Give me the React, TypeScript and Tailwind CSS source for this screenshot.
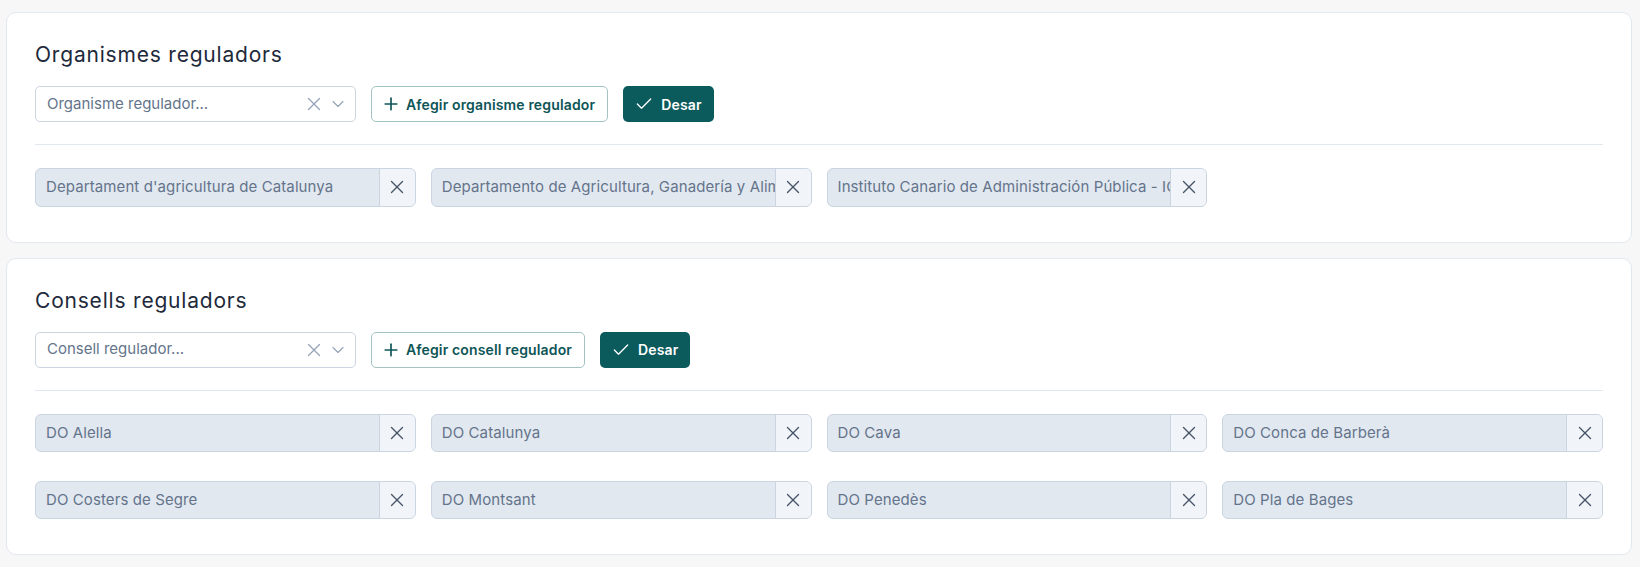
import React from 'react';
import { X, ChevronDown, Plus, Check } from 'lucide-react';

type SectionProps = {
    title: string;
    placeholder: string;
    addLabel: string;
    items: string[];
};

const Chip: React.FC<{ label: string }> = ({ label }) => (
    <div className="flex h-[38.5px] overflow-hidden rounded-md border border-[#cbd5e1] bg-[#e2e8f0]">
        <span className="flex min-w-0 flex-1 items-center overflow-hidden whitespace-nowrap pl-[10px] text-[15px] tracking-[0.1px] text-[#64748b]">
            {label}
        </span>
        <button className="flex w-9 shrink-0 items-center justify-center border-l border-[#cbd5e1] bg-[#f1f5f9] text-[#475569]">
            <X size={22} strokeWidth={1.5} />
        </button>
    </div>
);

const Section: React.FC<SectionProps> = ({ title, placeholder, addLabel, items }) => (
    <section className="rounded-[10px] border border-[#e2e8f0] bg-white px-7 pt-7 pb-[35px]">
        <h2 className="mb-[17px] text-[21px] leading-7 tracking-[0.8px] text-[#1e293b]">{title}</h2>

        {/* Toolbar */}
        <div className="flex items-center gap-[15px]">
            <div className="flex h-9 w-[321px] items-center rounded-[5px] border border-[#cbd5e1] bg-white pl-[11px] pr-[7px]">
                <span className="flex-1 text-[15px] text-[#64748b]">{placeholder}</span>
                <div className="flex items-center gap-[3px] text-[#94a3b8]">
                    <X size={22} strokeWidth={1.3} />
                    <ChevronDown size={20} strokeWidth={1.3} />
                </div>
            </div>
            <button className="flex h-9 items-center gap-2 rounded-[5px] border border-[#a3c3c4] bg-white px-3 text-[14px] font-semibold tracking-[0.15px] text-[#0e5557]">
                <Plus size={20} strokeWidth={2} className="-mx-[3px]" />
                {addLabel}
            </button>
            <button className="flex h-9 items-center gap-2 rounded-[5px] bg-[#0b5a5c] px-3 text-[14px] font-semibold tracking-[0.15px] text-white">
                <Check size={20} strokeWidth={1.6} className="-mx-[1px]" />
                Desar
            </button>
        </div>

        <div className="mt-[22px] mb-[23px] h-px bg-[#e2e8f0]" />

        {/* Selected items */}
        <div className="grid grid-cols-4 gap-x-[15px] gap-y-[28.5px]">
            {items.map((item) => (
                <Chip key={item} label={item} />
            ))}
        </div>
    </section>
);

export default function App() {
    return (
        <div
            className="flex min-h-screen flex-col gap-[15px] bg-[#f7f7f7] pt-3 pl-[6px] pr-[8px]"
            style={{ fontFamily: 'Inter, "Noto Sans", sans-serif' }}
        >
            <Section
                title="Organismes reguladors"
                placeholder="Organisme regulador..."
                addLabel="Afegir organisme regulador"
                items={[
                    "Departament d'agricultura de Catalunya",
                    'Departamento de Agricultura, Ganadería y Alimentación',
                    'Instituto Canario de Administración Pública - ICAP',
                ]}
            />
            <Section
                title="Consells reguladors"
                placeholder="Consell regulador..."
                addLabel="Afegir consell regulador"
                items={[
                    'DO Alella',
                    'DO Catalunya',
                    'DO Cava',
                    'DO Conca de Barberà',
                    'DO Costers de Segre',
                    'DO Montsant',
                    'DO Penedès',
                    'DO Pla de Bages',
                ]}
            />
        </div>
    );
}
